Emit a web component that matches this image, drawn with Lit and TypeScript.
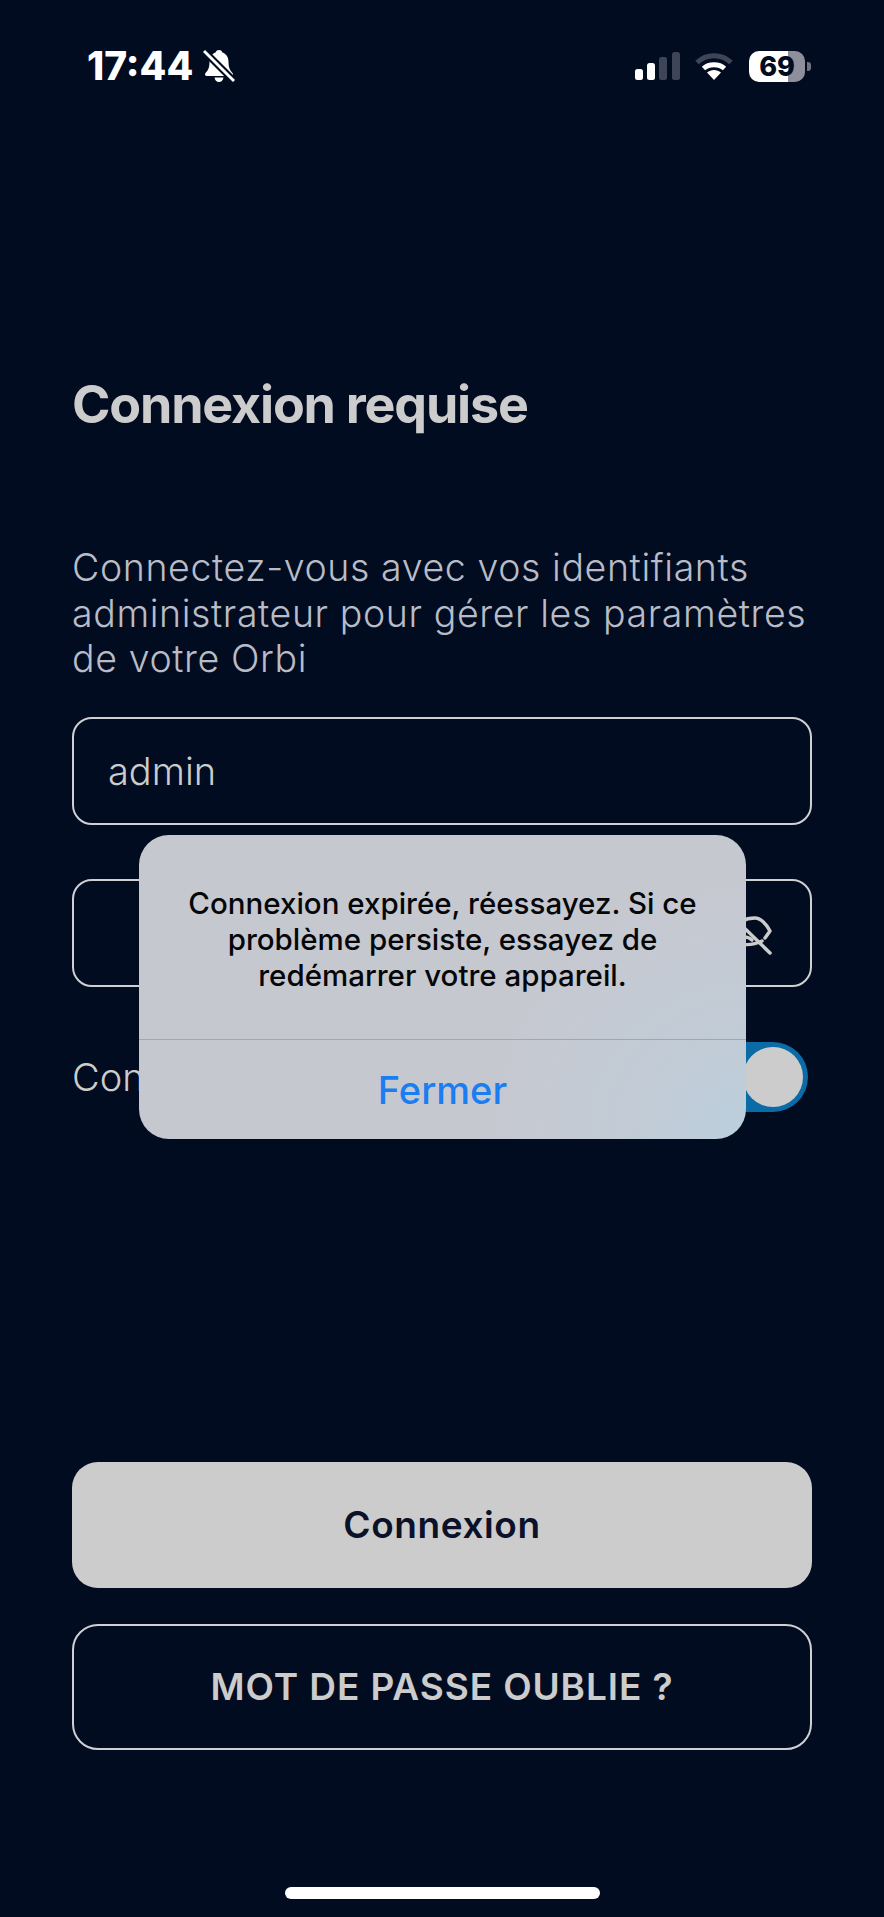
import { LitElement, html, css } from "lit";
import { customElement } from "lit/decorators.js";

@customElement("app-root")
export class AppRoot extends LitElement {
  static styles = css`
    :host {
      display: block;
      font-family: Inter, "Liberation Sans", sans-serif;
    }

    .screen {
      position: relative;
      box-sizing: border-box;
      width: 884px;
      height: 1917px;
      background: #010c20;
      color: #cccccc;
      overflow: hidden;
    }

    .status {
      display: flex;
      align-items: center;
      justify-content: space-between;
      height: 34px;
      padding: 49px 73px 0 87px;
    }

    .status-left,
    .status-right {
      display: flex;
      align-items: center;
    }

    .time {
      font-size: 39px;
      font-weight: 800;
      line-height: 34px;
      color: #fff;
    }

    .bell {
      margin-left: 10px;
    }

    .wifi {
      margin-left: 15px;
    }

    .battery {
      display: flex;
      align-items: center;
      margin-left: 16px;
    }

    .battery-body {
      display: flex;
      align-items: center;
      justify-content: center;
      width: 56px;
      height: 31px;
      border-radius: 10px;
      background: linear-gradient(90deg, #fff 70%, #8e8f9a 70%);
      color: #010c20;
      font-size: 27px;
      font-weight: 800;
    }

    .battery-tip {
      width: 4px;
      height: 9px;
      margin-left: 2px;
      border-radius: 0 3px 3px 0;
      background: #6f7280;
    }

    .content {
      display: flex;
      flex-direction: column;
      padding: 0 72px;
    }

    h1 {
      margin: 293px 0 0;
      font-size: 52px;
      font-weight: 700;
      line-height: 58px;
      letter-spacing: -1.2px;
      color: #cccccc;
    }

    .intro {
      margin: 111px 0 0;
      font-size: 37.5px;
      font-weight: 350;
      line-height: 45.5px;
      letter-spacing: 0.6px;
      color: #b9bcc6;
    }

    .field {
      display: flex;
      align-items: center;
      justify-content: space-between;
      box-sizing: border-box;
      height: 108px;
      padding: 0 34px;
      border: 2px solid #cfd0d4;
      border-radius: 20px;
      font-size: 38px;
      font-weight: 350;
      color: #cccccc;
    }

    .login {
      margin-top: 35px;
    }

    .password {
      margin-top: 54px;
      padding-right: 36px;
    }

    .eye {
      margin-top: 5px;
    }

    .remember {
      display: flex;
      align-items: center;
      justify-content: space-between;
      margin-top: 55px;
      font-size: 38px;
      font-weight: 350;
      color: #cccccc;
    }

    .toggle {
      display: flex;
      align-items: center;
      justify-content: flex-end;
      box-sizing: border-box;
      width: 114px;
      height: 70px;
      margin-right: 4px;
      padding-right: 5px;
      border-radius: 35px;
      background: #0a6ba6;
    }

    .knob {
      width: 60px;
      height: 60px;
      border-radius: 50%;
      background: #cccccc;
    }

    .actions {
      display: flex;
      flex-direction: column;
      gap: 36px;
      margin-top: 350px;
    }

    .button {
      display: flex;
      align-items: center;
      justify-content: center;
      box-sizing: border-box;
      height: 126px;
      border-radius: 26px;
      font-size: 37px;
      font-weight: 600;
      letter-spacing: 0.6px;
    }

    .primary {
      background: #cccccc;
      color: #0a1128;
    }

    .secondary {
      border: 2px solid #cfd0d4;
      letter-spacing: 0.9px;
      color: #cccccc;
    }

    .home {
      position: absolute;
      left: 285px;
      top: 1887px;
      width: 315px;
      height: 12px;
      border-radius: 6px;
      background: #fff;
    }

    .alert {
      position: absolute;
      left: 139px;
      top: 835px;
      display: flex;
      flex-direction: column;
      width: 607px;
      height: 304px;
      border-radius: 30px;
      background: radial-gradient(circle at 100% 100%, #bccfdd 0, #c1cbd6 110px, #c6c8d0 260px);
      text-align: center;
    }

    .alert-message {
      box-sizing: border-box;
      height: 205px;
      padding: 50px 36px 0;
      border-bottom: 1px solid #a3a6ad;
      color: #050608;
      font-size: 29.500px;
      font-weight: 550;
      line-height: 36px;
    }

    .alert-action {
      display: flex;
      flex: 1;
      align-items: center;
      justify-content: center;
      color: #1a7df0;
      font-size: 38px;
      font-weight: 550;
    }
  `;

  render() {
    return html`
      <div class="screen">
        <div class="status">
          <div class="status-left">
            <span class="time">17:44</span>
            <svg class="bell" width="32" height="34" viewBox="0 0 32 34">
              <path
                fill="#fff"
                d="M16 1c-2 0-3 1-3.400 2.600C8.500 5 6.500 8.500 6.500 13c0 5-1 8-4 11-1 1-.5 3 1.500 3h24c2 0 2.500-2 1.500-3-3-3-4-6-4-11 0-4.500-2-8-6.100-9.400C19 2 18 1 16 1zM11.500 28.500c.5 3 2.300 4.500 4.500 4.500s4-1.500 4.500-4.500z"
              />
              <path d="M1 2l30 30" stroke="#010c20" stroke-width="7" />
              <path d="M1 2l30 30" stroke="#fff" stroke-width="3" />
            </svg>
          </div>
          <div class="status-right">
            <svg width="45" height="28" viewBox="0 0 45 28">
              <rect x="0" y="17" width="8" height="11" rx="2.500" fill="#fff" />
              <rect x="12" y="11" width="8" height="17" rx="2.500" fill="#fff" />
              <rect x="24" y="5" width="8" height="23" rx="2.500" fill="#3f4558" />
              <rect x="37" y="0" width="8" height="28" rx="2.500" fill="#3f4558" />
            </svg>
            <svg class="wifi" width="38" height="28" viewBox="0 0 38 28">
              <path d="M2 10.500C11.500 1.500 26.500 1.500 36 10.500" fill="none" stroke="#3f4558" stroke-width="5" />
              <path d="M8.500 16.500C14 11.500 24 11.500 29.500 16.500" fill="none" stroke="#fff" stroke-width="5" />
              <path d="M12 20.500C16 17 22 17 26 20.500L19 28z" fill="#fff" />
            </svg>
            <div class="battery">
              <div class="battery-body">69</div>
              <div class="battery-tip"></div>
            </div>
          </div>
        </div>

        <div class="content">
          <h1>Connexion requise</h1>
          <p class="intro">
            Connectez-vous avec vos identifiants<br />administrateur pour gérer les paramètres<br />de votre
            Orbi
          </p>
          <div class="field login">admin</div>
          <div class="field password">
            <span></span>
            <svg class="eye" width="46" height="44" viewBox="0 0 46 44" fill="none" stroke="#cccccc" stroke-width="3.500" stroke-linecap="round" stroke-linejoin="round">
              <path d="M4 18C10 8 18 5 27 5C33 5 39 12 42 18L37 25" />
              <path d="M6 30C12 32 24 33 34 28" />
              <path d="M16 24C19 24 22 25 24 27" />
              <path d="M5 4L42 40" />
            </svg>
          </div>
          <div class="remember">
            <span>Connexion auto</span>
            <div class="toggle"><div class="knob"></div></div>
          </div>
          <div class="actions">
            <div class="button primary">Connexion</div>
            <div class="button secondary">MOT DE PASSE OUBLIE ?</div>
          </div>
        </div>

        <div class="home"></div>

        <div class="alert">
          <div class="alert-message">Connexion expirée, réessayez. Si ce problème persiste, essayez de redémarrer votre appareil.</div>
          <div class="alert-action">Fermer</div>
        </div>
      </div>
    `;
  }
}
